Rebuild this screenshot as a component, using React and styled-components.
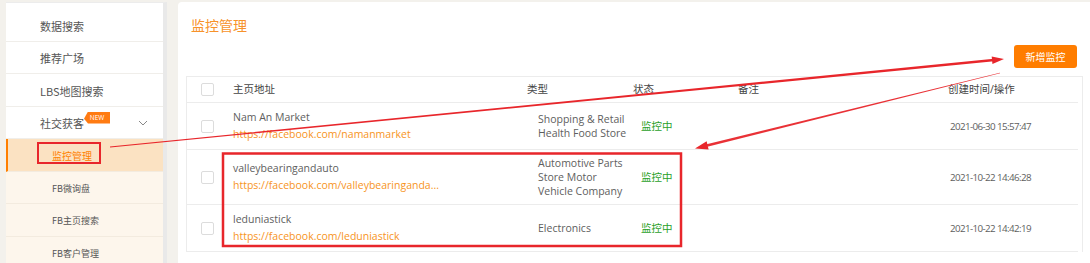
import React from "react";
import styled, { createGlobalStyle } from "styled-components";

const GlobalStyle = createGlobalStyle`
  body {
    margin: 0;
    background: #f3f1ec;
    font-family: "Open Sans", "Noto Sans CJK SC", sans-serif;
  }
`;

const Page = styled.div`
  position: relative;
  display: flex;
  width: 1090px;
  height: 263px;
  padding-top: 2px;
  box-sizing: border-box;
  overflow: hidden;
`;

const Sidebar = styled.div`
  width: 157px;
  margin-left: 6px;
  padding-top: 6px;
  background: #fff;
  border-right: 4px solid #e9e9e9;
  border-top: 1px solid #ececec;
`;

const MenuItem = styled.div`
  position: relative;
  display: flex;
  align-items: center;
  height: 32.5px;
  padding-top: 2px;
  box-sizing: border-box;
  border-bottom: 1px solid ${(p) => (p.$sub ? "#f3ebdf" : "#f0eeea")};
  background: ${(p) => (p.$active ? "#fbe2c2" : p.$sub ? "#fdf6ec" : "#fff")};
  border-left: ${(p) => (p.$active ? "2px solid #ff7f00" : "none")};
  padding-left: ${(p) => (p.$active ? 44 : p.$sub ? 46 : 34)}px;
  color: ${(p) => (p.$active ? "#ff8000" : "#555")};
  font-family: "Noto Sans CJK SC", sans-serif;
  font-size: ${(p) => (p.$active ? 10 : p.$sub ? 9 : 11)}px;
`;

const NewTag = styled.span`
  position: absolute;
  left: 78px;
  top: 5px;
  width: 26px;
  height: 12px;
  background: #ff7b12;
  color: #fff;
  font-family: "Open Sans", sans-serif;
  font-size: 6.5px;
  line-height: 12px;
  text-align: center;
  clip-path: polygon(4px 0, 100% 0, 100% 100%, 4px 100%, 0 60%);
`;

const Chevron = styled.svg`
  position: absolute;
  right: 15px;
  top: 13px;
`;

const Main = styled.div`
  flex: 1;
  margin-left: 11px;
  background: #fff;
  border-radius: 4px 0 0 0;
  padding-top: 13px;
`;

const Title = styled.div`
  padding-left: 13px;
  color: #f7922a;
  font-family: "Noto Sans CJK SC", sans-serif;
  font-size: 14px;
  line-height: 20px;
`;

const Toolbar = styled.div`
  display: flex;
  justify-content: flex-end;
  padding: 10px 13px 8px 0;
`;

const Button = styled.button`
  width: 63px;
  height: 23px;
  border: none;
  border-radius: 3px;
  background: #ff7d00;
  color: #fff;
  font-family: "Noto Sans CJK SC", sans-serif;
  font-size: 10px;
  padding: 0;
`;

const Table = styled.div`
  margin: 0 7px 0 8px;
  border: 1px solid #ececec;
  border-bottom: none;
  padding-right: 4px;
`;

const Row = styled.div`
  display: grid;
  grid-template-columns: 46px 294px 106px 105px 210px 1fr;
  align-items: center;
  border-bottom: 1px solid #ececec;
  padding: ${(p) => (p.$head ? "0" : "6px 0")};
  height: ${(p) => (p.$head ? "25px" : "auto")};
  color: ${(p) => (p.$head ? "#444" : "#5e5e5e")};
  font-size: 10.5px;
`;

const Cell = styled.div`
  padding-left: ${(p) => p.$pl || 0}px;
  line-height: ${(p) => p.$lh || 17}px;
  white-space: nowrap;
`;

const DateText = styled.span`
  font-family: "Open Sans", sans-serif;
  font-size: 9.8px;
  letter-spacing: -0.6px;
`;

const Check = styled.span`
  display: block;
  margin-left: 14px;
  width: 11px;
  height: 11px;
  border: 1px solid #dcdcdc;
  border-radius: 2px;
  background: #fff;
`;

const Link = styled.div`
  color: #f7941d;
`;

const Status = styled.span`
  color: #2a9f2a;
  font-family: "Noto Sans CJK SC", sans-serif;
`;

const Overlay = styled.svg`
  position: absolute;
  left: 0;
  top: 0;
  pointer-events: none;
`;

const rows = [
  {
    name: "Nam An Market",
    url: "https://facebook.com/namanmarket",
    type: ["Shopping & Retail", "Health Food Store"],
    date: "2021-06-30 15:57:47",
  },
  {
    name: "valleybearingandauto",
    url: "https://facebook.com/valleybearinganda...",
    type: ["Automotive Parts", "Store Motor", "Vehicle Company"],
    date: "2021-10-22 14:46:28",
  },
  {
    name: "leduniastick",
    url: "https://facebook.com/leduniastick",
    type: ["Electronics"],
    date: "2021-10-22 14:42:19",
  },
];

// tapered stroke from a to b
const taper = (a, b, wa, wb) => {
  const dx = b[0] - a[0];
  const dy = b[1] - a[1];
  const len = Math.hypot(dx, dy);
  const px = -dy / len;
  const py = dx / len;
  const pts = [
    [a[0] + (px * wa) / 2, a[1] + (py * wa) / 2],
    [b[0] + (px * wb) / 2, b[1] + (py * wb) / 2],
    [b[0] - (px * wb) / 2, b[1] - (py * wb) / 2],
    [a[0] - (px * wa) / 2, a[1] - (py * wa) / 2],
  ];
  return pts.map((p) => p.join(",")).join(" ");
};

const head = (from, tip, l, w) => {
  const dx = tip[0] - from[0];
  const dy = tip[1] - from[1];
  const len = Math.hypot(dx, dy);
  const ux = dx / len;
  const uy = dy / len;
  const bx = tip[0] - ux * l;
  const by = tip[1] - uy * l;
  return [tip, [bx - uy * w, by + ux * w], [bx + uy * w, by - ux * w]]
    .map((p) => p.join(","))
    .join(" ");
};

const Annotations = () => {
  const red = "#e8262b";
  const a1s = [110, 147];
  const a1t = [1004, 59];
  const a2s = [1000, 73];
  const a2t = [695, 148.5];
  return (
    <Overlay width="1090" height="263">
      <rect x="38" y="143" width="62" height="20" fill="none" stroke={red} strokeWidth="2" />
      <rect x="223" y="153.5" width="458" height="92.5" fill="none" stroke={red} strokeWidth="2.5" />
      <polygon points={taper(a1s, [994, 60], 1.2, 2.6)} fill={red} />
      <polygon points={head(a1s, a1t, 12, 3.8)} fill={red} />
      <polygon points={taper(a2s, [707, 145.5], 0.4, 2.8)} fill={red} opacity="0.95" />
      <polygon points={head(a2s, a2t, 13, 4.2)} fill={red} />
    </Overlay>
  );
};

export default function App() {
  return (
    <>
      <GlobalStyle />
      <Page>
        <Sidebar>
          <MenuItem>数据搜索</MenuItem>
          <MenuItem>推荐广场</MenuItem>
          <MenuItem>LBS地图搜索</MenuItem>
          <MenuItem>
            社交获客
            <NewTag>NEW</NewTag>
            <Chevron width="10" height="6" viewBox="0 0 10 6">
              <path d="M1 1 L5 5 L9 1" fill="none" stroke="#888" strokeWidth="1" />
            </Chevron>
          </MenuItem>
          <MenuItem $sub $active>监控管理</MenuItem>
          <MenuItem $sub>FB微询盘</MenuItem>
          <MenuItem $sub>FB主页搜索</MenuItem>
          <MenuItem $sub>FB客户管理</MenuItem>
        </Sidebar>
        <Main>
          <Title>监控管理</Title>
          <Toolbar>
            <Button>新增监控</Button>
          </Toolbar>
          <Table>
            <Row $head>
              <Cell><Check /></Cell>
              <Cell>主页地址</Cell>
              <Cell>类型</Cell>
              <Cell>状态</Cell>
              <Cell>备注</Cell>
              <Cell>创建时间/操作</Cell>
            </Row>
            {rows.map((r) => (
              <Row key={r.name}>
                <Cell><Check /></Cell>
                <Cell>
                  <div>{r.name}</div>
                  <Link>{r.url}</Link>
                </Cell>
                <Cell $pl={11} $lh={14}>
                  {r.type.map((t) => (
                    <div key={t}>{t}</div>
                  ))}
                </Cell>
                <Cell $pl={8}>
                  <Status>监控中</Status>
                </Cell>
                <Cell />
                <Cell $pl={2}>
                  <DateText>{r.date}</DateText>
                </Cell>
              </Row>
            ))}
          </Table>
        </Main>
        <Annotations />
      </Page>
    </>
  );
}
